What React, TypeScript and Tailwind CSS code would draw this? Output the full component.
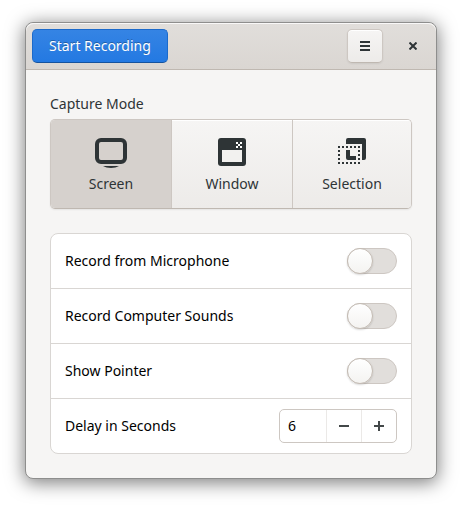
import React, { useState } from "react";

const ink = "#2e3436";

function ScreenIcon() {
  return (
    <svg width="32" height="32" viewBox="0 0 32 32" fill="none" aria-hidden="true">
      <rect x="2" y="4" width="28" height="22" rx="4" stroke={ink} strokeWidth="4" />
      <path d="M8 30h16c-2 1.300-5 2-8 2s-6-.7-8-2z" fill={ink} />
    </svg>
  );
}

function WindowIcon() {
  return (
    <svg width="32" height="32" viewBox="0 0 32 32" shapeRendering="crispEdges" aria-hidden="true">
      <rect x="2" y="2" width="28" height="28" rx="3" fill={ink} shapeRendering="auto" />
      <path d="M6 14h20v12H6z" fill="#f2f1ef" />
      <path d="M20 6h2v2h-2zM24 6h2v2h-2zM22 8h2v2h-2zM20 10h2v2h-2zM24 10h2v2h-2z" fill="#fff" />
    </svg>
  );
}

function SelectionIcon() {
  const cells = [0, 4, 8, 12, 16, 20];
  return (
    <svg width="32" height="32" viewBox="0 0 32 32" fill={ink} aria-hidden="true">
      <path d="M10 8V4q0-2 2-2h16q2 0 2 2v18q0 2-2 2h-2V8z" />
      <path d="M10 14h4v6h6v4h-8q-2 0-2-2z" />
      {cells.map((c) => (
        <React.Fragment key={c}>
          <rect x={2 + c} y="10" width="2" height="2" />
          <rect x={2 + c} y="26" width="2" height="2" />
        </React.Fragment>
      ))}
      {[14, 18, 22].map((y) => (
        <React.Fragment key={y}>
          <rect x="2" y={y} width="2" height="2" />
          <rect x="22" y={y} width="2" height="2" />
        </React.Fragment>
      ))}
    </svg>
  );
}

const modes = [
  { id: "Screen", Icon: ScreenIcon },
  { id: "Window", Icon: WindowIcon },
  { id: "Selection", Icon: SelectionIcon },
];

const toggles = ["Record from Microphone", "Record Computer Sounds", "Show Pointer"];

function ToggleRow({ label }: { label: string }) {
  return (
    <label className="flex h-[55px] items-center justify-between border-b border-[#d9d6d3] px-3.5">
      <span>{label}</span>
      <input
        type="checkbox"
        role="switch"
        className="h-[26px] w-[50px] appearance-none rounded-full border border-[#cdc7c2] bg-[#e1dedb] before:-mt-px before:-ml-px before:block before:size-[26px] before:rounded-full before:border before:border-[#c4bcb4] before:bg-linear-to-b before:from-white before:to-[#f4f3f1] before:shadow-[0_1px_2px_rgba(0,0,0,0.15)] before:content-[''] checked:bg-[#3584e4] checked:before:ml-[23px]"
      />
    </label>
  );
}

export default function App() {
  const [mode, setMode] = useState("Screen");
  const [delay, setDelay] = useState(6);

  return (
    <div className="bg-white px-[25px] pt-[22px] pb-7 font-['Noto_Sans',sans-serif] text-sm text-black">
      <main className="overflow-hidden rounded-lg border border-[#8e8e8d] bg-[#f6f5f4] shadow-[0_3px_18px_1px_rgba(0,0,0,0.5)]">
        <header className="flex items-center rounded-t-lg border-b border-[#bfb8b1] bg-linear-to-b from-[#e1dedb] to-[#dad6d2] p-1.5 shadow-[inset_0_1px_#f9f8f8]">
          <button className="h-[34px] rounded-[5px] border border-[#1b6acb] border-b-[#15539e] bg-linear-to-b from-[#3584e4] to-[#2379e2] px-4 text-white [text-shadow:0_-1px_rgba(0,0,0,0.3)]">
            Start Recording
          </button>
          <button
            aria-label="Menu"
            className="ml-auto flex h-[34px] w-9 items-center justify-center rounded-[5px] border border-[#cdc7c2] border-b-[#bfb8b1] bg-linear-to-b from-[#f6f5f4] to-[#edebe9] shadow-[inset_0_1px_#fff,0_1px_2px_rgba(0,0,0,0.07)]"
          >
            <svg width="10" height="10" viewBox="0 0 10 10" fill={ink} aria-hidden="true">
              <path d="M0 0h10v2H0zM0 4h10v2H0zM0 8h10v2H0z" />
            </svg>
          </button>
          <button aria-label="Close" className="ml-[13px] flex size-[34px] items-center justify-center">
            <svg width="8" height="8" viewBox="0 0 8 8" stroke={ink} strokeWidth="2" aria-hidden="true">
              <path d="M.5.5l7 7M7.500.5l-7 7" />
            </svg>
          </button>
        </header>

        <div className="p-6">
          <h2 id="mode-label" className="leading-5 text-[#2e3436]">Capture Mode</h2>
          <div
            role="group"
            aria-labelledby="mode-label"
            className="mt-[5px] grid grid-cols-[121fr_121fr_118fr] overflow-hidden rounded-[5px] border border-[#cdc7c2] border-b-[#bfb8b1] shadow-[0_1px_2px_rgba(0,0,0,0.07)]"
          >
            {modes.map(({ id, Icon }) => (
              <button
                key={id}
                aria-pressed={mode === id}
                onClick={() => setMode(id)}
                className="flex h-[88px] flex-col items-center gap-1.5 border-r border-[#cdc7c2] bg-linear-to-b from-[#f6f5f4] to-[#edebe9] pt-4 leading-5 text-[#2e3436] shadow-[inset_0_1px_#fff] last:border-r-0 aria-pressed:bg-[#d6d1cd] aria-pressed:bg-none aria-pressed:shadow-none"
              >
                <Icon />
                {id}
              </button>
            ))}
          </div>

          <div className="mt-6 overflow-hidden rounded-lg border border-[#d9d6d3] bg-white">
            {toggles.map((label) => (
              <ToggleRow key={label} label={label} />
            ))}
            <div className="flex h-[54px] items-center justify-between px-3.5">
              <label htmlFor="delay">Delay in Seconds</label>
              <div className="flex h-[34px] w-[118px] rounded-[5px] border border-[#cdc7c2]">
                <input
                  id="delay"
                  inputMode="numeric"
                  value={delay}
                  onChange={(e) => setDelay(Number(e.target.value) || 0)}
                  className="min-w-0 flex-1 bg-transparent px-2 outline-none"
                />
                <button
                  aria-label="Decrease"
                  onClick={() => setDelay(Math.max(0, delay - 1))}
                  className="flex w-[35px] items-center justify-center border-l border-[#ebe9e7]"
                >
                  <svg width="10" height="10" viewBox="0 0 10 10" fill="#434849" aria-hidden="true">
                    <path d="M0 4h10v2H0z" />
                  </svg>
                </button>
                <button
                  aria-label="Increase"
                  onClick={() => setDelay(delay + 1)}
                  className="flex w-[35px] items-center justify-center border-l border-[#ebe9e7]"
                >
                  <svg width="10" height="10" viewBox="0 0 10 10" fill="#434849" aria-hidden="true">
                    <path d="M4 0h2v4h4v2H6v4H4V6H0V4h4z" />
                  </svg>
                </button>
              </div>
            </div>
          </div>
        </div>
      </main>
    </div>
  );
}
